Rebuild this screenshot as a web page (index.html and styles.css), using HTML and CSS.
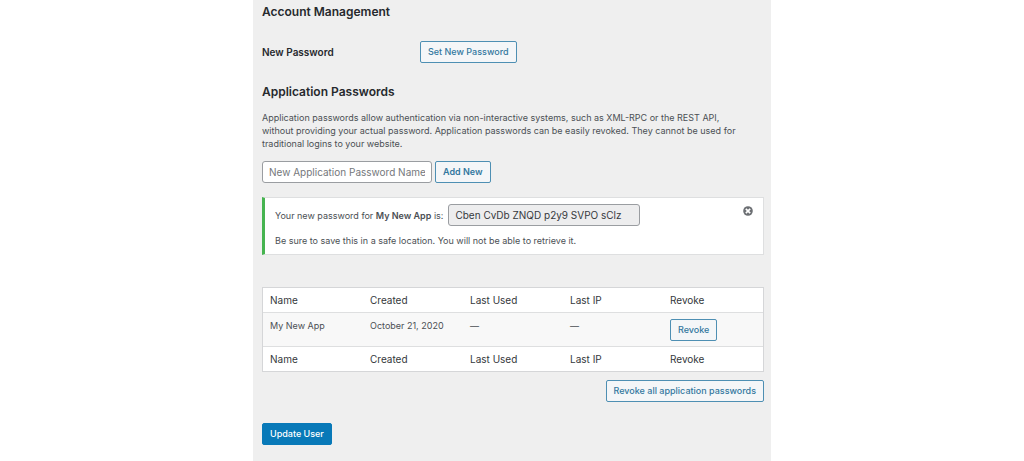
FILE: index.html
```
<!DOCTYPE html>
<html lang="en">
<head>
<meta charset="utf-8">
<title>Profile</title>
<link rel="stylesheet" href="styles.css">
</head>
<body>
<main class="panel">
  <h2 class="heading">Account Management</h2>
  <div class="field-row">
    <span class="field-label">New Password</span>
    <button type="button" class="button">Set New Password</button>
  </div>
  <h2 class="heading">Application Passwords</h2>
  <p class="description">Application passwords allow authentication via non-interactive systems, such as XML-RPC or the REST API, without providing your actual password. Application passwords can be easily revoked. They cannot be used for traditional logins to your website.</p>
  <div class="add-form">
    <input type="text" class="text-input name-input" placeholder="New Application Password Name" aria-label="New Application Password Name">
    <button type="button" class="button strong">Add New</button>
  </div>
  <section class="notice">
    <div class="notice-body">
      <div class="notice-line">
        <label for="new-password">Your new password for <strong>My New App</strong> is:</label>
        <input type="text" id="new-password" class="text-input password-output" value="Cben CvDb ZNQD p2y9 SVPO sClz" readonly>
      </div>
      <p class="notice-text">Be sure to save this in a safe location. You will not be able to retrieve it.</p>
    </div>
    <button type="button" class="dismiss" aria-label="Dismiss this notice">
      <svg viewBox="0 0 20 20" width="12" height="12" aria-hidden="true"><circle cx="10" cy="10" r="8" fill="#6c6f73"/><path d="M6.4 6.4l7.2 7.2M13.6 6.4l-7.2 7.2" stroke="#fff" stroke-width="2.8"/></svg>
    </button>
  </section>
  <table class="passwords">
    <thead>
      <tr><th scope="col">Name</th><th scope="col">Created</th><th scope="col">Last Used</th><th scope="col">Last IP</th><th scope="col">Revoke</th></tr>
    </thead>
    <tbody>
      <tr><td>My New App</td><td>October 21, 2020</td><td>—</td><td>—</td><td><button type="button" class="button">Revoke</button></td></tr>
    </tbody>
    <tfoot>
      <tr><th scope="col">Name</th><th scope="col">Created</th><th scope="col">Last Used</th><th scope="col">Last IP</th><th scope="col">Revoke</th></tr>
    </tfoot>
  </table>
  <div class="table-actions">
    <button type="button" class="button">Revoke all application passwords</button>
  </div>
  <button type="submit" class="button primary">Update User</button>
</main>
</body>
</html>
```
FILE: styles.css
```
* {
  box-sizing: border-box;
}

body {
  margin: 0;
  background: #fff;
  color: #4b4f54;
  font: 9px/13px Inter, "Liberation Sans", sans-serif;
}

.panel {
  max-width: 518px;
  min-height: 100vh;
  margin: 0 auto;
  padding: 4px 7px 16px 9px;
  background: #efefef;
}

.heading {
  margin: 0;
  color: #26292d;
  font-size: 12px;
  font-weight: 600;
  line-height: 16px;
}

.field-row {
  display: grid;
  grid-template-columns: 158px 1fr;
  align-items: center;
  justify-items: start;
  margin: 21px 0;
}

.field-label {
  color: #26292d;
  font-size: 10px;
  font-weight: 600;
}

.button {
  height: 22px;
  padding: 0 7px;
  border: 1px solid #4e8fb3;
  border-radius: 2px;
  background: #f4f6f8;
  color: #33789f;
  font: 500 9px/20px Inter, "Liberation Sans", sans-serif;
  white-space: nowrap;
}

.strong {
  font-weight: 600;
}

.primary {
  border-color: #0879b8;
  background: #0879b8;
  color: #fff;
}

.description {
  margin: 11px 0;
  padding-right: 15px;
}

.add-form {
  display: flex;
  gap: 3px;
  margin-bottom: 14px;
}

.text-input {
  height: 22px;
  padding: 0 6px;
  border: 1px solid #9a9da1;
  border-radius: 3px;
  background: #fff;
  color: #36393d;
  font: 10px/20px Inter, "Liberation Sans", sans-serif;
}

.text-input::placeholder {
  color: #74777b;
  opacity: 1;
}

.name-input {
  width: 170px;
}

.password-output {
  width: 192px;
  background: #ededee;
}

.notice {
  display: flex;
  justify-content: space-between;
  align-items: flex-start;
  margin-bottom: 32px;
  padding: 6px 9px 7px 10px;
  border: 1px solid #dedfe0;
  border-left: 3px solid #46b450;
  background: #fff;
}

.notice-line {
  display: flex;
  align-items: center;
  gap: 5px;
}

.notice-line strong {
  font-weight: 600;
}

.notice-text {
  margin: 8px 0 0;
}

.dismiss {
  display: flex;
  margin-top: 1px;
  padding: 0;
  border: 0;
  background: none;
}

.passwords {
  width: 100%;
  table-layout: fixed;
  border: 1px solid #d5d6d8;
  border-spacing: 0;
  background: #fff;
}

.passwords th,
.passwords td {
  padding: 6px 7px 5px;
  text-align: left;
  vertical-align: top;
}

.passwords th {
  color: #34373b;
  font-size: 10px;
  font-weight: 400;
}

.passwords td {
  border: solid #dedfe0;
  border-width: 1px 0;
  background: #f8f8f8;
}

.passwords td .button {
  display: block;
}

.table-actions {
  display: flex;
  justify-content: flex-end;
  margin: 8px 0 21px;
}
```
